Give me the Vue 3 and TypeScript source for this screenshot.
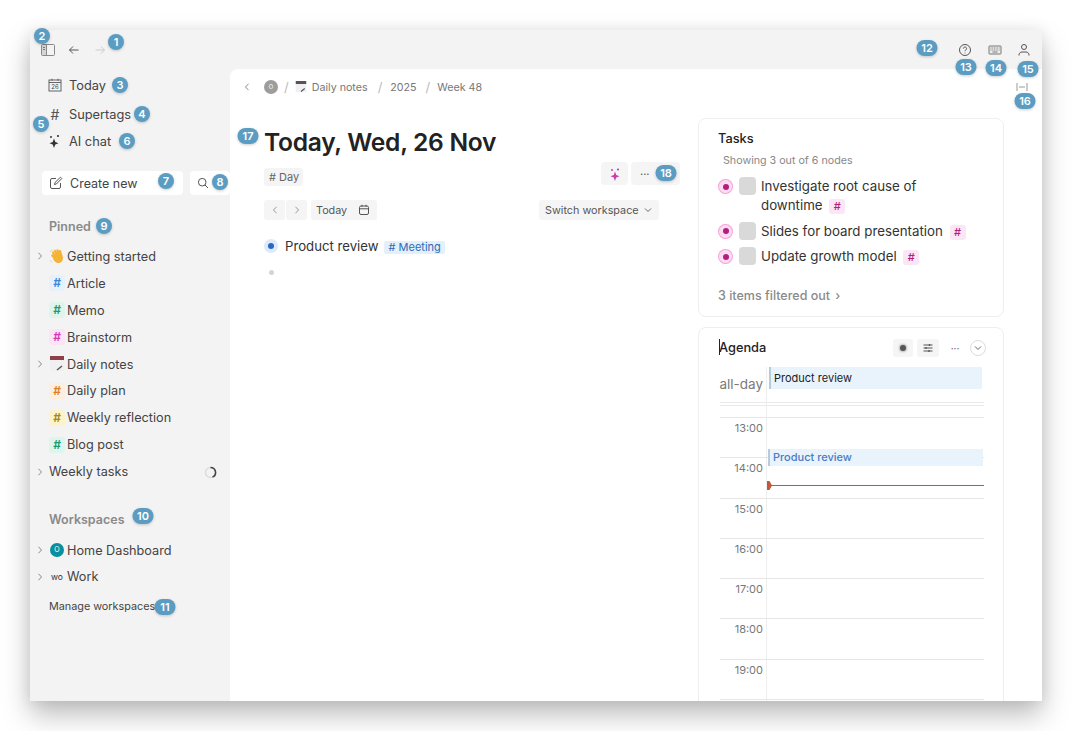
<script setup lang="ts">
interface Badge { n: number; x: number; y: number }
const badges: Badge[] = [
  { n: 1, x: 116, y: 42 }, { n: 2, x: 42, y: 36 }, { n: 3, x: 120, y: 85 }, { n: 4, x: 142, y: 114 },
  { n: 5, x: 41, y: 124 }, { n: 6, x: 127, y: 141 }, { n: 7, x: 166, y: 181 }, { n: 8, x: 220, y: 182 },
  { n: 9, x: 104, y: 226 }, { n: 10, x: 143, y: 516 }, { n: 11, x: 165, y: 607 }, { n: 12, x: 927, y: 48 },
  { n: 13, x: 966, y: 67 }, { n: 14, x: 996, y: 68 }, { n: 15, x: 1028, y: 69 }, { n: 16, x: 1025, y: 101 },
  { n: 17, x: 248, y: 136 }, { n: 18, x: 666, y: 173 },
]
interface Pin { label: string; kind: 'wave' | 'tag' | 'cal' | 'none'; tone?: string; arrow?: boolean; spin?: boolean }
const pinned: Pin[] = [
  { label: 'Getting started', kind: 'wave', arrow: true },
  { label: 'Article', kind: 'tag', tone: 'blue' },
  { label: 'Memo', kind: 'tag', tone: 'green' },
  { label: 'Brainstorm', kind: 'tag', tone: 'pink' },
  { label: 'Daily notes', kind: 'cal', arrow: true },
  { label: 'Daily plan', kind: 'tag', tone: 'orange' },
  { label: 'Weekly reflection', kind: 'tag', tone: 'yellow' },
  { label: 'Blog post', kind: 'tag', tone: 'green' },
  { label: 'Weekly tasks', kind: 'none', arrow: true, spin: true },
]
const tasks = ['Investigate root cause of downtime', 'Slides for board presentation', 'Update growth model']
const hours = ['13:00', '14:00', '15:00', '16:00', '17:00', '18:00', '19:00', '']
</script>

<template>
  <div class="stage">
    <div class="window">
      <header class="topbar">
        <div class="top-left">
          <svg class="ti" width="16" height="16" viewBox="0 0 16 16" fill="none" stroke="#888" stroke-width="1">
            <path d="M2 3h4.500v10H2z" fill="#d4d4d4" stroke="none" />
            <rect x="1.500" y="2.500" width="13" height="11" rx="1" />
            <path d="M6.500 2.500v11" />
            <path d="M3 5.500h2M3 7.500h2" stroke="#777" />
          </svg>
          <svg class="ti" width="16" height="16" viewBox="0 0 16 16" fill="none" stroke="#555" stroke-width="1">
            <path d="M12.500 8h-9M7 4.500 3.500 8 7 11.500" />
          </svg>
          <svg class="ti" width="16" height="16" viewBox="0 0 16 16" fill="none" stroke="#ccc" stroke-width="1">
            <path d="M3.500 8h9M9 4.500 12.500 8 9 11.500" />
          </svg>
        </div>
        <div class="top-right">
          <svg class="help" width="14" height="14" viewBox="0 0 14 14" fill="none" stroke="#555" stroke-width="1">
            <circle cx="7" cy="7" r="5.500" />
            <path d="M5.400 5.600a1.600 1.600 0 1 1 2.500 1.300c-.6.400-.9.700-.9 1.300" />
            <path d="M7 9.600v.7" />
          </svg>
          <svg width="16" height="14" viewBox="0 0 16 14" fill="none" stroke="#777" stroke-width="1">
            <rect x="2" y="3" width="12" height="8" rx=".5" fill="#eee" />
            <path d="M3.500 5h9M3.500 7h9" stroke-dasharray="1 .7" />
            <path d="M5.500 9h5" />
          </svg>
          <svg width="14" height="14" viewBox="0 0 14 14" fill="none" stroke="#555" stroke-width="1">
            <circle cx="7" cy="4" r="2.500" />
            <path d="M2 12.500v-.5c0-1.700 1.300-3 3-3h4c1.700 0 3 1.300 3 3v.5" />
          </svg>
        </div>
      </header>

      <div class="body">
        <aside class="sidebar">
          <nav class="mainnav">
            <div class="nav-row r1">
              <svg width="14" height="14" viewBox="0 0 14 14" fill="none" stroke="#555" stroke-width=".9">
                <rect x="1" y="2" width="12" height="11" />
                <path d="M1 4.500h12M4 .8v2M10 .8v2" />
                <text x="7" y="11.300" text-anchor="middle" font-size="6" stroke="none" fill="#444" font-family="Inter, sans-serif">26</text>
              </svg>
              <span>Today</span>
            </div>
            <div class="nav-row r2">
              <span class="plain-hash">#</span>
              <span>Supertags</span>
            </div>
            <div class="nav-row r3">
              <svg width="14" height="14" viewBox="0 0 14 14" fill="#333">
                <path d="M6 4.500 7.300 8 10.500 9.300 7.300 10.500 6 14 4.700 10.500 1.500 9.300 4.700 8z" />
                <circle cx="3" cy="3" r="1" /><circle cx="10" cy="2" r="1.100" />
              </svg>
              <span>AI chat</span>
            </div>
          </nav>

          <div class="actions">
            <button class="create">
              <svg width="14" height="14" viewBox="0 0 14 14" fill="none" stroke="#555" stroke-width="1">
                <path d="M7 2.500H3A1.500 1.500 0 0 0 1.500 4v7A1.500 1.500 0 0 0 3 12.500h7A1.500 1.500 0 0 0 11.500 11V7" />
                <path d="M5.500 8.500 6 6.500 11.500 1.200l1.300 1.300L7.400 8z" />
              </svg>
              <span>Create new</span>
            </button>
            <button class="search">
              <svg width="12" height="12" viewBox="0 0 12 12" fill="none" stroke="#555" stroke-width="1">
                <circle cx="5.200" cy="5.200" r="3.800" /><path d="m8 8 3 3" />
              </svg>
            </button>
          </div>

          <h3 class="sec pinned">Pinned</h3>
          <ul class="tree">
            <li v-for="p in pinned" :key="p.label" class="tree-row">
              <svg v-if="p.arrow" class="arrow" width="6" height="8" viewBox="0 0 6 8" fill="none" stroke="#888" stroke-width="1"><path d="m1.500 .8 3 3.200-3 3.200" /></svg>
              <svg v-if="p.kind === 'wave'" class="glyph" width="16" height="16" viewBox="0 0 16 16" fill="none" stroke-linecap="round">
                <path d="M4 9c0 3.500 2.500 6 5.500 6s4.500-2.500 4.500-5.500L13 6 6 6z" fill="#f5b335" />
                <path d="M6 8 4 4.500M8 7 6 2.800M10 6.500 8.500 2.300M12 7l-1-4" stroke="#f5b335" stroke-width="2.200" />
                <path d="M5 9 3.300 7.500" stroke="#f5b335" stroke-width="2.400" />
                <path d="M1.500 3.500 3 1.800M1.200 12.500l1.500 1.500" stroke="#cfcfcf" stroke-width="1" />
              </svg>
              <span v-else-if="p.kind === 'tag'" class="glyph tagbox" :class="p.tone">#</span>
              <svg v-else-if="p.kind === 'cal'" class="glyph" width="16" height="16" viewBox="0 0 16 16">
                <rect x="1" y="1" width="14" height="14" fill="#f0f0f2" />
                <rect x="1" y="0" width="14" height="4" fill="#8e3f48" />
                <path d="M8 14l5-4" stroke="#555" stroke-width="1.500" />
              </svg>
              <span class="tree-label">{{ p.label }}</span>
              <svg v-if="p.spin" class="spin" width="13" height="13" viewBox="0 0 13 13" fill="none" stroke-width="1.500">
                <circle cx="6.500" cy="6.500" r="5" stroke="#ddd" />
                <path d="M6.500 1.500a5 5 0 0 1 2 9.600" stroke="#444" />
              </svg>
            </li>
          </ul>

          <h3 class="sec workspaces">Workspaces</h3>
          <ul class="tree ws">
            <li class="tree-row">
              <svg class="arrow" width="6" height="8" viewBox="0 0 6 8" fill="none" stroke="#888" stroke-width="1"><path d="m1.500 .8 3 3.200-3 3.200" /></svg>
              <span class="glyph wsdot">O</span>
              <span class="tree-label">Home Dashboard</span>
            </li>
            <li class="tree-row">
              <svg class="arrow" width="6" height="8" viewBox="0 0 6 8" fill="none" stroke="#888" stroke-width="1"><path d="m1.500 .8 3 3.200-3 3.200" /></svg>
              <span class="glyph wo">wo</span>
              <span class="tree-label">Work</span>
            </li>
          </ul>
          <div class="manage">Manage workspaces</div>
        </aside>

        <main class="panel">
          <div class="crumbs">
            <svg class="back" width="6" height="8" viewBox="0 0 6 8" fill="none" stroke="#888" stroke-width="1"><path d="M4.500 .8 1.500 4l3 3.200" /></svg>
            <span class="cdot">o</span>
            <span class="slash s1">/</span>
            <svg class="ccal" width="12" height="12" viewBox="0 0 16 16">
              <rect x="1" y="1" width="14" height="14" fill="#f0f0f2" />
              <rect x="1" y="0" width="14" height="4" fill="#555" />
              <path d="M8 14l5-4" stroke="#555" stroke-width="1.500" />
            </svg>
            <span>Daily notes</span>
            <span class="slash s2">/</span>
            <span>2025</span>
            <span class="slash s3">/</span>
            <span>Week 48</span>
            <svg class="expand" width="12" height="8" viewBox="0 0 12 8" fill="none" stroke="#999" stroke-width="1"><path d="M1 0v8M11 0v8M3 4h6" /></svg>
          </div>

          <div class="columns">
            <section class="doc">
              <h1>Today, Wed, 26 Nov</h1>
              <div class="tagrow">
                <span class="chip"># Day</span>
                <div class="doc-actions">
                  <span class="dbtn spark">
                    <svg width="14" height="14" viewBox="0 0 14 14" fill="#c93bb0">
                      <path d="M7 4.500 8.200 8 11.500 9.300 8.200 10.500 7 14 5.800 10.500 2.500 9.300 5.800 8z" />
                      <circle cx="4" cy="3" r="1" /><circle cx="10" cy="2.500" r="1.100" />
                    </svg>
                  </span>
                  <span class="dbtn more">···</span>
                </div>
              </div>
              <div class="navrow">
                <div class="navleft">
                  <span class="nbtn"><svg width="6" height="8" viewBox="0 0 6 8" fill="none" stroke="#999" stroke-width="1"><path d="M4.500 .8 1.500 4l3 3.200" /></svg></span>
                  <span class="nbtn"><svg width="6" height="8" viewBox="0 0 6 8" fill="none" stroke="#999" stroke-width="1"><path d="m1.500 .8 3 3.200-3 3.200" /></svg></span>
                  <span class="nbtn today">Today
                    <svg width="12" height="12" viewBox="0 0 12 12" fill="none" stroke="#555" stroke-width="1">
                      <rect x="1.500" y="2" width="9" height="8.500" rx="1.500" /><path d="M1.500 4.800h9M4 .8v2M8 .8v2" />
                    </svg>
                  </span>
                </div>
                <span class="nbtn switch">Switch workspace
                  <svg width="8" height="6" viewBox="0 0 8 6" fill="none" stroke="#666" stroke-width="1"><path d="M1 1.500 4 4.500l3-3" /></svg>
                </span>
              </div>
              <div class="outline">
                <div class="node">
                  <span class="bul blue"><i></i></span>
                  <span class="node-text">Product review</span>
                  <span class="meeting"># Meeting</span>
                </div>
                <div class="node">
                  <span class="bul grey"><i></i></span>
                </div>
              </div>
            </section>

            <section class="side">
              <div class="card tasks">
                <div class="card-title">Tasks</div>
                <div class="showing">Showing 3 out of 6 nodes</div>
                <div class="tasklist">
                  <div v-for="t in tasks" :key="t" class="task">
                    <span class="bul pink"><i></i></span>
                    <span class="check"></span>
                    <span class="task-text">{{ t }} <span class="hash">#</span></span>
                  </div>
                </div>
                <div class="filtered">3 items filtered out <span class="fa">›</span></div>
              </div>

              <div class="card agenda">
                <div class="ag-head">
                  <div class="card-title ag-title"><span class="caret"></span>Agenda</div>
                  <div class="ag-tools">
                    <span class="ag-btn dotbtn"><i></i></span>
                    <span class="ag-btn slidebtn">
                      <svg width="12" height="12" viewBox="0 0 12 12" fill="none" stroke="#555" stroke-width="1"><path d="M1.500 3h9M1.500 6h9M1.500 9h9" /><path d="M7.500 2v2M4 5v2M7 8v2" stroke-width="1.300" /></svg>
                    </span>
                    <span class="ag-dots">···</span>
                    <span class="ag-circle">
                      <svg width="8" height="6" viewBox="0 0 8 6" fill="none" stroke="#666" stroke-width="1"><path d="M1 1.500 4 4.500l3-3" /></svg>
                    </span>
                  </div>
                </div>
                <div class="cal">
                  <div class="allday">
                    <span class="allday-label">all-day</span>
                    <div class="allday-cell"><div class="ev-all">Product review</div></div>
                  </div>
                  <div class="gap-row"><span></span><span></span></div>
                  <div class="hours">
                    <div v-for="h in hours" :key="h" class="hour">
                      <span class="hour-label">{{ h }}</span>
                      <span class="hour-cell"></span>
                    </div>
                    <div class="ev-timed">Product review</div>
                    <div class="now"></div>
                  </div>
                </div>
              </div>
            </section>
          </div>
        </main>
      </div>
    </div>

    <span
      v-for="b in badges"
      :key="b.n"
      class="badge"
      :class="{ wide: b.n > 9 }"
      :style="{ left: b.x + 'px', top: b.y + 'px' }"
    >{{ b.n }}</span>
  </div>
</template>

<style>
html, body { margin: 0; background: #fff; overflow: hidden; }
</style>

<style scoped>
.stage {
  position: relative;
  width: 1072px;
  height: 731px;
  padding: 30px;
  box-sizing: border-box;
  overflow: hidden;
  font-family: Inter, "Liberation Sans", sans-serif;
  color: #444;
}
.window {
  width: 1012px;
  height: 671px;
  background: #f3f3f3;
  display: flex;
  flex-direction: column;
  overflow: hidden;
  box-shadow: 0 14px 26px rgba(0, 0, 0, .26), 0 0 14px rgba(0, 0, 0, .08);
}
.topbar {
  height: 39px;
  flex: none;
  display: flex;
  justify-content: space-between;
  align-items: center;
  padding: 0 11px 0 10px;
}
.top-left { display: flex; gap: 10px; align-items: center; }
.top-right { display: flex; gap: 14px; align-items: center; }
.help { margin-right: 1px; }
.body { flex: 1; display: flex; min-height: 0; }
.sidebar { width: 200px; flex: none; position: relative; }
.mainnav { padding: 0 0 0 18px; }
.nav-row { display: flex; align-items: center; gap: 7px; font-size: 12.800px; height: 20px; color: #444; }
.nav-row svg, .plain-hash { width: 14px; flex: none; }
.plain-hash { font-size: 14px; text-align: center; color: #555; }
.r1 { margin-top: 6px; }
.r2 { margin-top: 9px; }
.r3 { margin-top: 7px; }
.actions { display: flex; gap: 7px; margin: 20px 0 0 12px; }
.create, .search {
  height: 24px;
  background: #fff;
  border: none;
  border-radius: 4px;
  padding: 0;
  display: flex;
  align-items: center;
  font: inherit;
  color: inherit;
}
.create { width: 141px; padding-left: 7px; gap: 7px; font-size: 12.500px; box-sizing: border-box; }
.search { width: 40px; padding-left: 7px; box-sizing: border-box; }
.sec { margin: 0; font-size: 12.500px; font-weight: 600; color: #8a8a8a; line-height: 20px; padding-left: 19px; }
.pinned { margin-top: 22px; }
.tree { list-style: none; margin: 6px 0 0; padding: 0; }
.tree-row { height: 26.900px; display: flex; align-items: center; position: relative; padding-left: 19px; font-size: 12.700px; }
.arrow { position: absolute; left: 7px; top: 50%; margin-top: -4px; }
.glyph { width: 16px; height: 16px; flex: none; margin-right: 2px; display: block; }
.tree-label { white-space: nowrap; color: #444; }
.tagbox { border-radius: 3px; text-align: center; font-size: 12px; line-height: 16px; font-weight: 600; }
.blue { background: #e6f1fb; color: #3b86d6; }
.green { background: #dff5ec; color: #1f9a72; }
.pink { background: #fbe4f6; color: #d23ab4; }
.orange { background: #fdeedd; color: #d9822b; }
.yellow { background: #fcf3cb; color: #a28a10; }
.spin { position: absolute; left: 174px; top: 8px; }
.workspaces { margin-top: 25px; }
.ws { margin-top: 7px; }
.ws .tree-row { height: 26.500px; }
.wsdot {
  width: 14px; height: 14px; border-radius: 50%; background: #0a8f9e; color: #fff;
  font-size: 7px; text-align: center; line-height: 14px; margin: 0 3px 0 1px;
}
.wo { font-size: 8.500px; color: #333; line-height: 16px; text-align: center; }
.manage { font-size: 10.800px; color: #444; padding-left: 19px; margin-top: 10px; line-height: 14px; white-space: nowrap; }

.panel { flex: 1; background: #fff; border-top-left-radius: 8px; min-width: 0; overflow: hidden; }
.crumbs {
  height: 36px;
  display: flex;
  align-items: center;
  font-size: 10.700px;
  color: #777;
  padding: 0 14px 0 14px;
  white-space: nowrap;
}
.back { margin-right: 14px; }
.cdot {
  width: 14px; height: 14px; border-radius: 50%; background: #9d9d9d; color: #e8e8e8;
  font-size: 8px; text-align: center; line-height: 13px; flex: none;
}
.slash { color: #bbb; font-size: 13px; }
.s1 { margin: 0 6px 0 6px; }
.s2 { margin: 0 8px 0 10px; }
.s3 { margin: 0 7px 0 9px; }
.ccal { margin-right: 5px; }
.expand { margin-left: auto; }
.columns { display: flex; }
.doc { width: 416px; margin-left: 34px; flex: none; }
h1 { margin: 20px 0 0; font-size: 24.600px; font-weight: 600; line-height: 34px; color: #222; letter-spacing: -.012em; white-space: nowrap; }
.tagrow { display: flex; justify-content: space-between; margin-top: 3px; height: 24px; }
.chip {
  align-self: flex-end; height: 18px; line-height: 18px; background: #f4f4f4; border-radius: 3px;
  padding: 0 4px 0 5px; font-size: 11px; color: #666;
}
.doc-actions { display: flex; gap: 3px; }
.dbtn { height: 23px; background: #f5f5f5; border-radius: 4px; display: flex; align-items: center; }
.spark { width: 27px; justify-content: center; }
.more { width: 49px; padding-left: 9px; box-sizing: border-box; font-size: 11px; color: #555; }
.navrow { display: flex; justify-content: space-between; margin-top: 14px; padding-right: 21px; }
.navleft { display: flex; gap: 1px; }
.nbtn {
  height: 20px; background: #f5f5f5; border-radius: 3px; display: flex; align-items: center;
  font-size: 10.800px; color: #555; white-space: nowrap;
}
.navleft .nbtn { width: 21px; justify-content: center; }
.navleft .today { width: 66px; margin-left: 3px; gap: 11px; justify-content: flex-start; padding-left: 5px; box-sizing: border-box; }
.switch { width: 120px; padding-left: 6px; box-sizing: border-box; gap: 5px; }
.outline { margin-top: 16px; display: flex; flex-direction: column; gap: 6px; }
.node { height: 20px; display: flex; align-items: center; gap: 7px; font-size: 13.200px; color: #333; }
.bul { width: 14px; height: 14px; flex: none; border-radius: 50%; display: flex; align-items: center; justify-content: center; }
.bul i { width: 6px; height: 6px; border-radius: 50%; display: block; }
.bul.blue { background: #dceafa; }
.bul.blue i { background: #2a66c4; }
.bul.grey i { background: #d5d5d5; width: 5px; height: 5px; }
.meeting {
  height: 13px; line-height: 13px; background: #e3f0fb; color: #2c6bb8; border-radius: 2px;
  padding: 0 4px 0 5px; font-size: 11px; margin: 3px 0 0 -2px;
}
.side { width: 306px; margin-left: 18px; flex: none; padding-top: 13px; display: flex; flex-direction: column; gap: 10px; }
.card { border: 1px solid #eee; border-radius: 8px; padding: 10px 19px 13px; background: #fff; box-sizing: border-box; }
.tasks { padding-bottom: 12px; }
.card-title { font-size: 12.800px; font-weight: 500; line-height: 20px; color: #222; }
.ag-title { margin-left: 1px; }
.showing { font-size: 10.700px; color: #888; line-height: 16px; margin: 4px 0 0 5px; }
.tasklist { margin-top: 8px; display: flex; flex-direction: column; gap: 6.500px; }
.task { display: flex; align-items: flex-start; font-size: 13.300px; line-height: 19px; color: #333; }
.bul.pink { background: #fbdcf1; width: 15px; height: 15px; margin-top: 2px; box-shadow: inset 0 0 0 1px #f3a9dc; }
.bul.pink i { background: #b51e7e; }
.check { width: 17px; height: 18px; background: #d9d9d9; border-radius: 4px; flex: none; margin: 0 5px 0 6px; }
.task-text { width: 210px; }
.hash {
  display: inline-block; width: 16px; height: 15px; line-height: 15px; text-align: center; font-size: 11px;
  background: #fbe6f6; color: #b51e7e; border-radius: 3px; margin-left: 3px; font-weight: 500;
}
.filtered { margin-top: 22px; font-size: 12.500px; font-weight: 500; color: #8a8a8a; line-height: 16px; }
.fa { margin-left: 2px; }
.agenda { padding-bottom: 0; height: 420px; }
.ag-head { display: flex; justify-content: space-between; align-items: center; height: 20px; }
.caret { display: inline-block; width: 1px; height: 16px; background: #222; margin-right: -1px; vertical-align: -3px; }
.ag-tools { display: flex; align-items: center; margin-right: -1px; }
.ag-btn { height: 18px; background: #f5f5f5; border-radius: 3px; display: flex; align-items: center; justify-content: center; }
.dotbtn { width: 20px; }
.dotbtn i { width: 6px; height: 6px; background: #555; border-radius: 50%; box-shadow: 0 0 2px 1px #bbb; }
.slidebtn { width: 22px; margin-left: 4px; }
.ag-dots { width: 28px; text-align: center; font-size: 10px; color: #666; margin-left: 2px; }
.ag-circle {
  width: 14px; height: 14px; border: 1px solid #ddd; border-radius: 50%; display: flex;
  align-items: center; justify-content: center; margin-left: 1px; margin-right: -1px;
}
.cal { width: 264px; margin: 9px 0 0 2px; }
.allday { display: grid; grid-template-columns: 46px 1fr; height: 35px; border-bottom: 1px solid #eaeaea; box-sizing: content-box; }
.allday-label { color: #7a7a7a; font-size: 13.500px; line-height: 18px; text-align: right; padding: 8px 3px 0 0; margin-left: -2px; white-space: nowrap; }
.allday-cell { border-left: 1px solid #eee; padding: 0 2px 0 2px; }
.ev-all {
  height: 22px; line-height: 22px; background: #e9f3fc; border-left: 2px solid #b7cbdd;
  font-size: 11px; color: #222; padding-left: 3px; box-sizing: border-box;
}
.gap-row { display: grid; grid-template-columns: 46px 1fr; height: 2px; border-bottom: 1px solid #eaeaea; }
.gap-row span:last-child { border-left: 1px solid #eee; }
.hours { position: relative; margin-top: 0; padding-top: 11px; }
.hours::before { content: ""; position: absolute; left: 46px; top: 0; height: 12px; border-left: 1px solid #eee; }
.hour { display: grid; grid-template-columns: 46px 1fr; height: 40.250px; border-top: 1px solid #e6e6e6; box-sizing: border-box; }
.hour-label { font-size: 11px; line-height: 14px; text-align: right; padding: 3px 3px 0 0; color: #777; }
.hour-cell { border-left: 1px solid #eee; }
.ev-timed {
  position: absolute; left: 48px; right: 1px; top: 43px; height: 17px; line-height: 17px;
  background: #e9f3fc; border-left: 2px solid #b7cbdd; font-size: 11px; font-weight: 500;
  color: #4a7cc4; padding-left: 3px; box-sizing: border-box;
}
.now { position: absolute; left: 47px; right: 0; top: 79px; height: 1px; background: #c4553b; }
.now::before {
  content: ""; position: absolute; left: 0; top: -4px; width: 5px; height: 9px; background: #c0583f;
  clip-path: polygon(0 0, 50% 0, 100% 50%, 50% 100%, 0 100%);
}
.badge {
  position: absolute;
  transform: translate(-50%, -50%);
  min-width: 16px;
  height: 16px;
  border-radius: 8px;
  background: #5b9cc2;
  color: #fff;
  font-size: 11px;
  font-weight: 600;
  line-height: 16px;
  text-align: center;
  box-shadow: 0 1px 3px rgba(0, 0, 0, .2);
}
.badge.wide { min-width: 21px; }
</style>
